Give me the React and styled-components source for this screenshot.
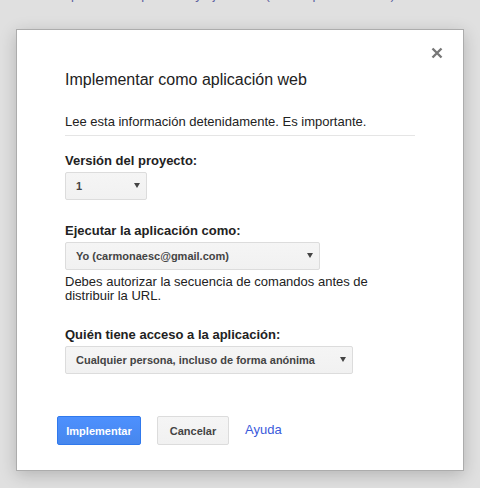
import React from "react";
import styled, { createGlobalStyle } from "styled-components";

const Global = createGlobalStyle`
  html, body { margin: 0; padding: 0; background: #e0e0e0; }
  body { font-family: "Liberation Sans", Arial, sans-serif; overflow: hidden; }
`;

const Page = styled.div`
  width: 480px;
  height: 488px;
  background: #e0e0e0;
  overflow: hidden;
`;

const BehindText = styled.div`
  margin: -12px 0 0 40px;
  height: 12px;
  font-size: 13px;
  line-height: 13px;
  color: #3a3f8f;
  white-space: nowrap;
  opacity: 0.8;
`;

const Dialog = styled.div`
  position: relative;
  box-sizing: border-box;
  width: 448px;
  height: 442px;
  margin: 29px 0 0 16px;
  background: #fff;
  border: 1px solid #acacac;
  box-shadow: 0 4px 16px rgba(0, 0, 0, 0.2);
  padding: 40px 48px 0 48px;
`;

const Close = styled.button`
  position: absolute;
  top: 17px;
  right: 20px;
  width: 12px;
  height: 12px;
  padding: 0;
  border: 0;
  background: none;
  cursor: pointer;
  display: flex;
`;

const Title = styled.h1`
  margin: 0;
  font-size: 16px;
  line-height: 20px;
  font-weight: normal;
  color: #222;
`;

const Intro = styled.p`
  margin: 24px 0 0;
  font-size: 13px;
  line-height: 16px;
  color: #222;
`;

const Rule = styled.hr`
  margin: 5px 0 0;
  width: 350px;
  border: 0;
  border-top: 1px solid #e5e5e5;
`;

const Field = styled.div`
  display: flex;
  flex-direction: column;
  align-items: flex-start;
  margin-top: ${(p) => p.$gap}px;
`;

const Label = styled.label`
  font-size: 13px;
  line-height: 16px;
  font-weight: bold;
  color: #222;
`;

const Select = styled.div`
  box-sizing: border-box;
  margin-top: 3px;
  width: ${(p) => p.$w}px;
  height: 28px;
  display: flex;
  align-items: center;
  justify-content: space-between;
  padding: 0 6px 0 10px;
  background: linear-gradient(#f5f5f5, #f1f1f1);
  border: 1px solid #dcdcdc;
  border-radius: 2px;
  font-size: 11px;
  font-weight: bold;
  color: #444;
`;

const Arrow = styled.span`
  width: 0;
  height: 0;
  margin-top: -2px;
  border-left: 3px solid transparent;
  border-right: 3px solid transparent;
  border-top: 5px solid #444;
`;

const Help = styled.p`
  margin: 5px 0 0;
  width: 310px;
  font-size: 13px;
  line-height: 14px;
  color: #222;
`;

const Actions = styled.div`
  display: flex;
  align-items: center;
  gap: 16px;
  margin: 42px 0 0 -8px;
`;

const Button = styled.button`
  box-sizing: border-box;
  width: ${(p) => p.$w}px;
  height: 29px;
  padding: 0;
  border-radius: 2px;
  font-family: "Liberation Sans", Arial, sans-serif;
  font-size: 11px;
  font-weight: bold;
  cursor: pointer;
  color: ${(p) => (p.$primary ? "#fff" : "#444")};
  border: 1px solid ${(p) => (p.$primary ? "#3079ed" : "#dcdcdc")};
  background: ${(p) =>
    p.$primary
      ? "linear-gradient(#4d90fe, #4787ed)"
      : "linear-gradient(#f5f5f5, #f1f1f1)"};
`;

const Link = styled.a`
  font-size: 13px;
  color: #3b5bdb;
  text-decoration: none;
  cursor: pointer;
  margin-top: -2px;
`;

function Dropdown({ w, children }) {
  return (
    <Select $w={w}>
      <span>{children}</span>
      <Arrow />
    </Select>
  );
}

export default function App() {
  return (
    <Page>
      <Global />
      <BehindText>
        Para publicar la aplicación y ejecutarla (como aplicación web)
      </BehindText>
      <Dialog>
        <Close aria-label="Cerrar">
          <svg width="12" height="12" viewBox="0 0 12 12">
            <path d="M1.5 1.5 L10.5 10.5 M10.5 1.5 L1.5 10.5" stroke="#777" strokeWidth="2.4" />
          </svg>
        </Close>
        <Title>Implementar como aplicación web</Title>
        <Intro>Lee esta información detenidamente. Es importante.</Intro>
        <Rule />
        <Field $gap={17}>
          <Label>Versión del proyecto:</Label>
          <Dropdown w={82}>1</Dropdown>
        </Field>
        <Field $gap={23}>
          <Label>Ejecutar la aplicación como:</Label>
          <Dropdown w={255}>Yo (carmonaesc@gmail.com)</Dropdown>
          <Help>Debes autorizar la secuencia de comandos antes de distribuir la URL.</Help>
        </Field>
        <Field $gap={24}>
          <Label>Quién tiene acceso a la aplicación:</Label>
          <Dropdown w={288}>Cualquier persona, incluso de forma anónima</Dropdown>
        </Field>
        <Actions>
          <Button $primary $w={84}>Implementar</Button>
          <Button $w={72}>Cancelar</Button>
          <Link>Ayuda</Link>
        </Actions>
      </Dialog>
    </Page>
  );
}
